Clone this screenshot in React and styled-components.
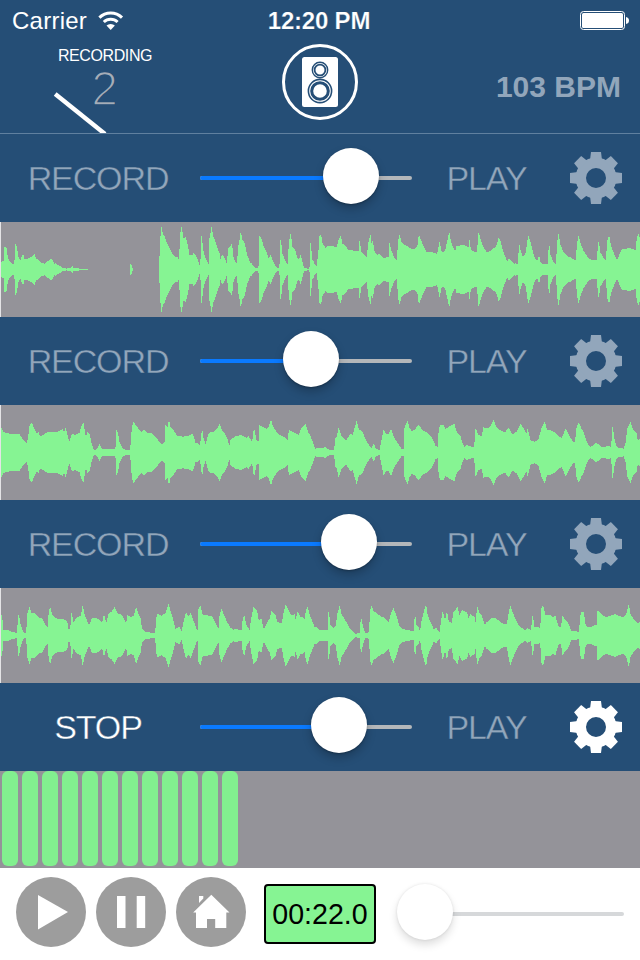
import React from 'react';
import styled, { createGlobalStyle } from 'styled-components';

const BLUE = '#254e76';
const MUTED = '#92a6bb';
const GREEN = '#86f493';

const GlobalStyle = createGlobalStyle`
  body {
    margin: 0;
    background: #fff;
    font-family: 'Liberation Sans', Arial, sans-serif;
  }
`;

const Screen = styled.div`
  width: 640px;
  height: 960px;
  display: flex;
  flex-direction: column;
  overflow: hidden;
  background: #fff;
`;

const StatusBar = styled.div`
  display: grid;
  grid-template-columns: 1fr auto 1fr;
  align-items: center;
  height: 40px;
  padding: 0 11px 0 12px;
  box-sizing: border-box;
  background: ${BLUE};
  color: #fff;
  font-size: 24px;
  line-height: 40px;
`;

const Carrier = styled.div`
  display: flex;
  align-items: center;
  gap: 11px;
  padding-top: 1px;
  letter-spacing: 0.25px;
`;

const Clock = styled.div`
  font-weight: bold;
  padding: 1px 3px 0 0;
  letter-spacing: -0.2px;
  -webkit-text-stroke: 0.2px ${BLUE};
`;

const Battery = styled.svg`
  justify-self: end;
  margin-top: 1px;
`;

const Header = styled.div`
  display: grid;
  grid-template-columns: 210px 220px 210px;
  height: 94px;
  box-sizing: border-box;
  border-bottom: 1px solid #60809f;
  background: ${BLUE};
`;

const Counter = styled.div`
  position: relative;
  display: flex;
  flex-direction: column;
  align-items: center;
  color: #fff;
`;

const CounterLabel = styled.div`
  margin-top: 6px;
  font-size: 16px;
  line-height: 20px;
  letter-spacing: -0.4px;
`;

const Beat = styled.div`
  margin: -1px 1px 0 0;
  font-size: 48px;
  line-height: 48px;
  color: #a5adb8;
  -webkit-text-stroke: 1.7px ${BLUE};
`;

const Needle = styled.svg`
  position: absolute;
  left: 50px;
  bottom: 0;
`;

const Output = styled.div`
  display: flex;
  justify-content: center;
  padding-top: 4px;
`;

const Tempo = styled.div`
  justify-self: end;
  padding: 29px 19px 0 0;
  font-size: 30px;
  line-height: 36px;
  font-weight: bold;
  color: ${MUTED};
`;

const Controls = styled.div`
  display: grid;
  grid-template-columns: 196px 220px 141px 78px;
  align-items: center;
  height: 88px;
  background: ${BLUE};
`;

const TextButton = styled.div`
  justify-self: center;
  font-size: 34px;
  line-height: 40px;
  letter-spacing: -1.1px;
  color: ${(p) => (p.$active ? '#fff' : MUTED)};
  -webkit-text-stroke: 0.4px ${BLUE};
`;

const Rail = styled.div`
  position: relative;
  width: 212px;
  height: 4px;
  margin-left: 4px;
  border-radius: 2px;
  background: #b4b7ba;
`;

const RailFill = styled.div`
  height: 4px;
  border-radius: 2px;
  background: #0a7aff;
`;

const Knob = styled.div`
  position: absolute;
  top: -28px;
  width: 56px;
  height: 56px;
  margin-left: -28px;
  border-radius: 50%;
  background: #fff;
  box-shadow: 0 5px 10px rgba(0, 0, 0, 0.22), 0 1px 2px rgba(0, 0, 0, 0.25);
`;

const GearIcon = styled.svg`
  justify-self: center;
  fill: ${(p) => (p.$active ? '#fff' : MUTED)};
`;

const Wave = styled.svg`
  display: block;
  width: 640px;
  height: 95px;
  background: #949399;
`;

const Beats = styled.div`
  display: flex;
  gap: 4px;
  height: 97px;
  padding: 0 2px 2px;
  box-sizing: border-box;
  background: #949399;
`;

const BeatBar = styled.div`
  width: 16px;
  border-radius: 6px;
  background: #82f08f;
`;

const Footer = styled.div`
  display: flex;
  align-items: center;
  height: 92px;
  padding-left: 16px;
  background: #fff;
`;

const Buttons = styled.div`
  display: flex;
  gap: 10px;
  margin-bottom: 4px;
`;

const RoundButton = styled.div`
  width: 70px;
  height: 70px;
  border-radius: 50%;
  background: #9d9d9d;

  svg {
    display: block;
    fill: #fff;
  }
`;

const Timer = styled.div`
  width: 112px;
  height: 60px;
  margin-left: 18px;
  box-sizing: border-box;
  border: 2px solid #000;
  border-radius: 4px;
  background: ${GREEN};
  color: #000;
  font-size: 28.6px;
  line-height: 57px;
  text-align: center;
`;

const Seek = styled.div`
  position: relative;
  width: 222px;
  height: 4px;
  margin-left: 26px;
  border-radius: 2px;
  background: #d6d8da;
`;

const SeekKnob = styled(Knob)`
  left: 23px;
  box-shadow: 0 5px 9px rgba(0, 0, 0, 0.13), 0 0 3px rgba(0, 0, 0, 0.1);
`;

// Envelopes as "position:level" pairs, three units per pixel.
const WAVE_1 =
  '0:18 10:22 13:62 18:62 20:43 25:28 35:20 42:12 46:76 50:58 54:34 60:22 68:45 72:32 85:34 95:36 102:42 106:30 115:28 125:20 132:14 140:20 148:24 154:30 160:20 170:13 180:8 188:3 195:2 200:1 212:4 215:9 219:3 240:1 262:1 263:0 388:0 390:16 394:12 397:0 476:0 478:42 482:120 484:127 487:107 492:97 497:82 502:70 510:55 520:42 533:35 537:20 539:100 544:124 548:90 556:94 562:75 567:45 575:42 580:48 590:30 598:10 600:5 604:100 608:60 615:35 625:12 628:90 634:124 638:95 646:80 652:62 657:50 660:30 665:45 670:35 680:12 684:60 689:65 695:78 698:40 705:25 711:15 713:62 717:80 721:106 726:85 733:75 740:45 748:25 756:12 765:3 773:1 775:10 777:97 782:95 790:70 797:55 805:28 810:40 816:25 825:10 830:2 836:2 838:15 841:90 846:45 855:20 863:12 866:80 871:106 876:70 884:60 890:35 896:25 901:38 907:15 912:2 925:1 929:8 931:80 935:30 942:15 950:8 955:55 958:100 ' +
  '962:106 965:82 970:75 975:65 980:68 990:66 1010:68 1015:90 1021:100 1026:75 1035:65 1045:55 1055:60 1065:55 1075:50 1078:80 1082:50 1090:42 1100:38 1104:80 1110:104 1113:75 1117:82 1123:45 1130:40 1138:45 1150:36 1165:34 1168:74 1172:55 1180:36 1190:28 1194:90 1198:104 1203:80 1212:70 1225:65 1245:62 1252:70 1256:100 1260:88 1268:70 1278:55 1290:50 1310:42 1315:65 1318:82 1322:58 1330:52 1336:60 1343:90 1347:106 1351:80 1358:65 1365:55 1369:72 1385:70 1405:65 1408:88 1411:60 1430:48 1435:104 1440:88 1448:68 1460:52 1475:55 1488:65 1495:95 1500:88 1507:60 1513:40 1520:20 1526:28 1535:22 1552:14 1554:20 1556:80 1560:55 1568:32 1576:45 1584:100 1590:85 1597:55 1604:30 1612:22 1616:36 1620:20 1630:14 1643:14 1646:80 1650:40 1658:20 1668:14 1670:75 1675:106 1680:75 1688:55 1700:35 1715:32 1727:28 1730:75 1735:100 1740:75 1750:50 1760:38 1775:30 1790:24 1792:50 1795:78 1800:48 1810:35 1817:30 1821:85 1826:100 1832:65 1840:45 1850:25 1857:45 1865:62 1880:58 1895:62 1906:60 1910:95 1914:104 1920:85';

const WAVE_2 =
  '0:72 5:68 8:58 15:55 30:57 45:54 58:50 66:38 80:30 85:55 88:80 95:85 100:70 108:55 115:60 118:50 135:55 155:60 175:64 187:65 192:55 196:70 203:42 208:35 215:58 225:50 238:54 243:75 250:90 254:55 258:50 262:62 268:52 273:25 280:6 290:8 298:26 304:10 318:10 345:8 347:30 349:70 353:55 358:24 370:8 388:5 391:25 395:75 400:92 405:80 415:65 425:60 432:70 440:60 455:52 470:40 485:25 493:28 496:80 502:70 506:93 510:75 520:68 530:50 548:42 560:50 577:56 585:25 598:20 602:35 605:70 609:45 616:25 625:55 640:58 652:75 658:88 663:70 672:55 680:38 687:15 692:40 705:50 730:46 740:42 744:52 753:35 757:38 761:70 768:32 775:30 778:80 790:78 800:70 806:75 812:92 817:75 830:60 845:48 862:32 866:65 880:62 895:50 905:70 915:85 922:65 930:50 938:25 945:10 ' +
  '960:12 975:14 990:5 1002:6 1005:40 1010:50 1015:75 1022:50 1028:40 1038:32 1050:55 1058:55 1063:75 1069:92 1075:65 1085:60 1095:40 1105:25 1112:10 1120:22 1127:10 1138:6 1144:38 1150:70 1157:55 1165:50 1172:65 1180:45 1192:30 1203:10 1210:8 1213:70 1222:92 1226:75 1235:65 1245:70 1255:78 1265:65 1280:62 1293:45 1305:18 1312:15 1316:70 1320:82 1328:85 1336:68 1350:75 1362:85 1370:60 1380:48 1387:20 1392:16 1405:20 1422:18 1426:70 1432:50 1444:45 1450:75 1465:75 1472:78 1480:92 1486:75 1500:68 1515:60 1525:68 1535:52 1550:65 1560:82 1570:68 1578:52 1582:70 1590:38 1605:30 1615:35 1625:75 1633:92 1640:70 1655:60 1675:50 1685:45 1695:68 1705:50 1712:38 1724:30 1729:75 1735:88 1742:70 1752:50 1760:28 1770:18 1785:25 1805:14 1825:18 1833:15 1837:72 1843:30 1850:14 1870:10 1876:25 1882:70 1890:88 1898:70 1908:60 1912:35 1920:40';

const WAVE_3 =
  '0:62 5:55 8:15 22:15 35:8 50:7 55:58 60:30 70:7 78:6 81:65 88:85 92:65 105:62 115:55 125:52 135:30 142:20 146:70 150:80 155:62 165:55 185:45 200:40 205:15 210:22 214:70 218:40 225:45 230:50 242:55 247:88 252:65 260:45 266:28 275:48 295:50 306:40 311:62 318:32 325:60 335:70 343:88 350:68 362:60 373:40 378:35 382:62 392:55 402:60 407:82 412:65 420:50 425:18 435:10 445:10 450:5 465:7 468:50 472:65 485:60 497:65 505:90 510:70 518:50 525:20 535:25 545:10 550:35 557:68 565:58 571:68 578:45 588:18 592:15 595:75 600:88 606:65 620:60 635:52 645:35 655:22 658:60 663:80 670:60 680:35 690:22 700:18 725:15 728:50 732:55 737:32 748:18 753:50 760:82 770:68 775:40 783:50 790:18 800:35 810:50 813:70 825:60 830:42 845:38 851:70 856:88 862:75 872:60 882:65 886:45 892:68 900:52 913:48 917:75 922:86 930:55 938:35 942:22 ' +
  '960:15 975:15 982:16 985:68 990:28 998:18 1007:30 1012:70 1018:88 1024:60 1035:40 1050:18 1065:4 1079:5 1082:50 1087:25 1095:6 1106:8 1110:75 1113:86 1120:68 1135:60 1150:55 1165:35 1173:65 1179:80 1188:60 1197:30 1205:18 1235:12 1240:12 1244:64 1248:28 1260:12 1264:40 1272:75 1277:92 1282:60 1290:40 1300:15 1307:20 1318:8 1322:40 1327:72 1334:45 1340:68 1345:35 1355:35 1360:70 1372:88 1376:60 1385:72 1400:65 1405:50 1410:65 1423:55 1427:25 1430:85 1436:65 1445:55 1453:32 1460:42 1475:50 1495:45 1505:38 1520:30 1524:55 1530:86 1538:65 1550:40 1560:22 1575:14 1582:20 1592:14 1597:60 1602:25 1620:18 1624:80 1628:88 1635:62 1650:60 1657:50 1665:55 1673:30 1682:25 1687:60 1693:45 1702:35 1712:12 1735:10 1739:35 1742:68 1750:65 1756:25 1775:28 1790:28 1792:70 1805:60 1830:55 1850:62 1870:55 1878:60 1885:88 1890:62 1900:50 1910:38 1920:36';

function levelAt(points, pos) {
  const i = Math.max(1, points.findIndex(([x]) => x >= pos));
  const [x0, y0] = points[i - 1];
  const [x1, y1] = points[i];
  return (y0 + ((y1 - y0) * (pos - x0)) / (x1 - x0)) / 3;
}

function wavePath(envelope) {
  const points = envelope.split(' ').map((pair) => pair.split(':').map(Number));
  let d = '';
  for (let x = 1; x < 640; x++) {
    const level = Math.max(
      levelAt(points, x * 3),
      levelAt(points, x * 3 + 1)
    );
    const ripple = level > 6 ? Math.sin(x * 12.9898) : 0;
    const amp = Math.round(level + ripple);
    if (level > 0.1) d += `M${x} ${47 - amp}h1v${amp * 2 + 1}h-1z`;
  }
  return d;
}

function Waveform({ envelope }) {
  return (
    <Wave viewBox="0 0 640 95" shapeRendering="crispEdges">
      <rect width="1" height="95" fill="#e4e4e6" />
      <path d={wavePath(envelope)} fill={GREEN} />
    </Wave>
  );
}

function Gear({ active }) {
  return (
    <GearIcon $active={active} width="52" height="52" viewBox="-26 -26 52 52">
      <path
        fillRule="evenodd"
        d="M0-20.5a20.5 20.5 0 1 0 0 41a20.5 20.5 0 1 0 0-41zM0-10a10 10 0 1 1 0 20a10 10 0 1 1 0-20z"
      />
      {[0, 45, 90, 135, 180, 225, 270, 315].map((angle) => (
        <path
          key={angle}
          transform={`rotate(${angle})`}
          d="M-5-26H5L6-18H-6z"
        />
      ))}
    </GearIcon>
  );
}

function Track({ level, recording, children }) {
  return (
    <div>
      <Controls>
        <TextButton $active={recording}>
          {recording ? 'STOP' : 'RECORD'}
        </TextButton>
        <Rail>
          <RailFill style={{ width: level }} />
          <Knob style={{ left: level }} />
        </Rail>
        <TextButton>PLAY</TextButton>
        <Gear active={recording} />
      </Controls>
      {children}
    </div>
  );
}

function App() {
  return (
    <Screen>
      <GlobalStyle />
      <StatusBar>
        <Carrier>
          Carrier
          <svg width="26" height="20" viewBox="0 0 26 20">
            <g fill="none" stroke="#fff" strokeWidth="3">
              <path d="M1.4 6.6a16 16 0 0 1 22.6 0" />
              <path d="M5.8 11a10 10 0 0 1 13.8 0" />
            </g>
            <path d="M12.7 19l-4.2-4.4a6 6 0 0 1 8.4 0z" fill="#fff" />
          </svg>
        </Carrier>
        <Clock>12:20 PM</Clock>
        <Battery width="49" height="20" viewBox="0 0 49 20">
          <rect x="0.5" y="0.5" width="44" height="18" rx="3" fill="none" stroke="#fff" />
          <rect x="2" y="2" width="41" height="15" rx="1.5" fill="#fff" />
          <path d="M46 6q3 .5 3 3.5t-3 3.5z" fill="#fff" />
        </Battery>
      </StatusBar>

      <Header>
        <Counter>
          <CounterLabel>RECORDING</CounterLabel>
          <Beat>2</Beat>
          <Needle width="60" height="42" viewBox="0 0 60 42">
            <path d="M5.2 3L55 43" stroke="#fff" strokeWidth="4.4" />
          </Needle>
        </Counter>
        <Output>
          <svg width="76" height="76" viewBox="0 0 76 76">
            <circle cx="38" cy="38" r="36.5" fill="none" stroke="#fff" strokeWidth="3" />
            <rect x="20" y="13" width="36" height="50" rx="2.5" fill="#fff" />
            <g fill="none" stroke={BLUE}>
              <circle cx="38" cy="26" r="7.7" strokeWidth="1.4" />
              <circle cx="38" cy="26" r="5.4" strokeWidth="1.8" />
              <circle cx="38" cy="47" r="11.6" strokeWidth="1.6" />
              <circle cx="38" cy="47" r="8.3" strokeWidth="3" />
            </g>
          </svg>
        </Output>
        <Tempo>103 BPM</Tempo>
      </Header>

      <Track level={151}>
        <Waveform envelope={WAVE_1} />
      </Track>
      <Track level={111}>
        <Waveform envelope={WAVE_2} />
      </Track>
      <Track level={149}>
        <Waveform envelope={WAVE_3} />
      </Track>
      <Track level={139} recording>
        <Beats>
          {Array.from({ length: 12 }, (_, i) => (
            <BeatBar key={i} />
          ))}
        </Beats>
      </Track>

      <Footer>
        <Buttons>
          <RoundButton>
            <svg width="70" height="70" viewBox="0 0 70 70">
              <path d="M22 18L52 35L22 52.5z" />
            </svg>
          </RoundButton>
          <RoundButton>
            <svg width="70" height="70" viewBox="0 0 70 70">
              <path d="M21 19h8.5v32H21zM40.7 19h8.5v32h-8.5z" />
            </svg>
          </RoundButton>
          <RoundButton>
            <svg width="70" height="70" viewBox="0 0 70 70">
              <path d="M35.3 17.8L53.5 35.6H50.3V51H39.2V42H31V51H20V35.6H17.2zM23 19h4.3v2.6L23 26z" />
            </svg>
          </RoundButton>
        </Buttons>
        <Timer>00:22.0</Timer>
        <Seek>
          <SeekKnob />
        </Seek>
      </Footer>
    </Screen>
  );
}

export default App;
